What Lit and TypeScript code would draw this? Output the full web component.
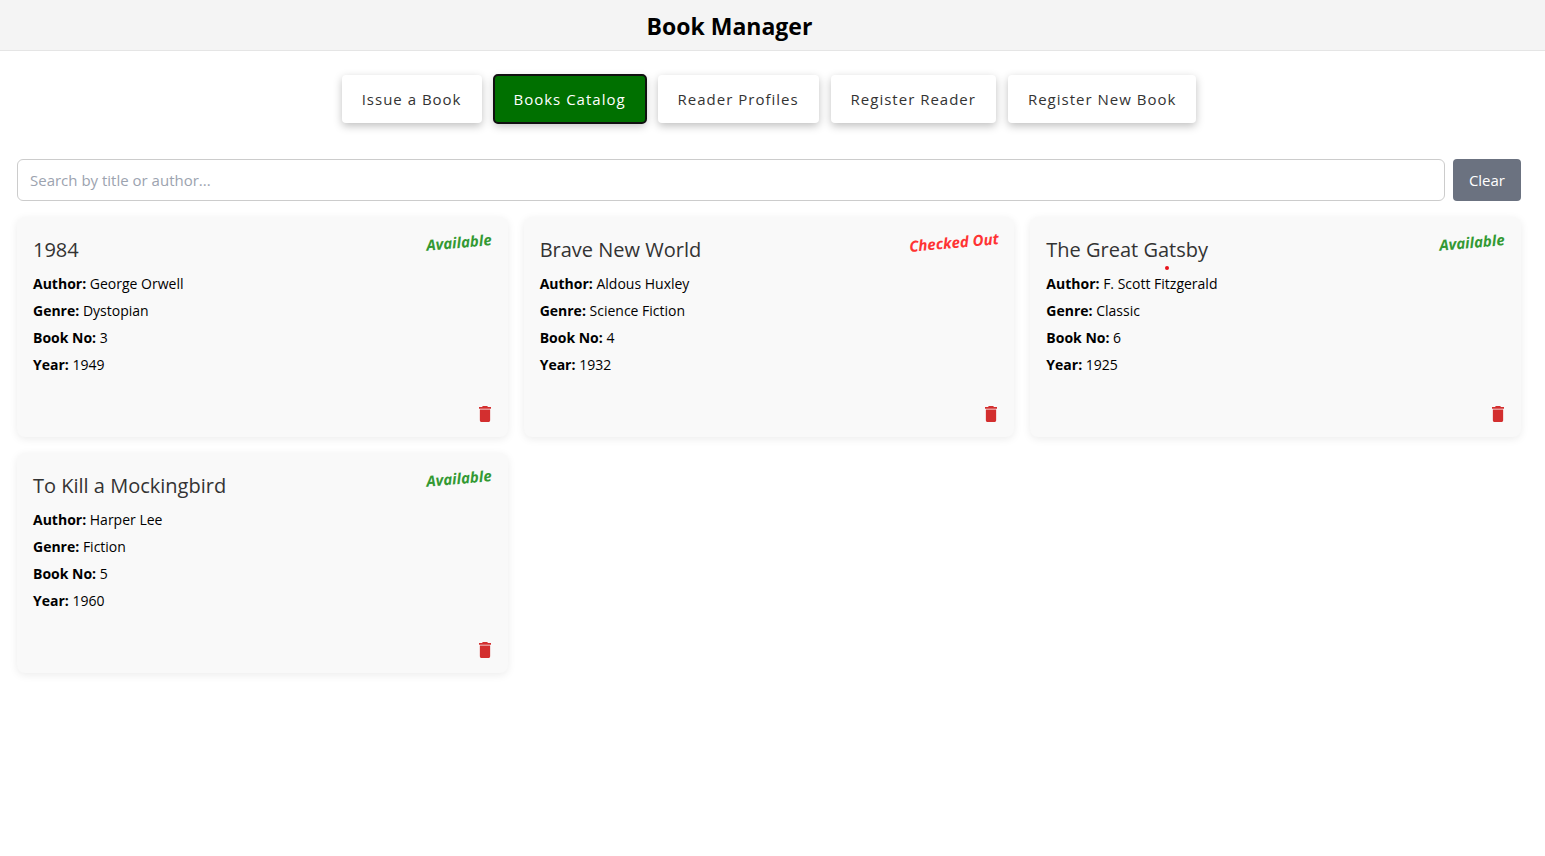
import { LitElement, html, css, svg } from "lit";
import { customElement, property, state } from "lit/decorators.js";
import { classMap } from "lit/directives/class-map.js";

interface Book {
  title: string;
  author: string;
  genre: string;
  no: number;
  year: number;
  available: boolean;
  marked?: boolean;
}

const BOOKS: Book[] = [
  { title: "1984", author: "George Orwell", genre: "Dystopian", no: 3, year: 1949, available: true },
  { title: "Brave New World", author: "Aldous Huxley", genre: "Science Fiction", no: 4, year: 1932, available: false },
  { title: "The Great Gatsby", author: "F. Scott Fitzgerald", genre: "Classic", no: 6, year: 1925, available: true, marked: true },
  { title: "To Kill a Mockingbird", author: "Harper Lee", genre: "Fiction", no: 5, year: 1960, available: true },
];

const TABS = ["Issue a Book", "Books Catalog", "Reader Profiles", "Register Reader", "Register New Book"];

const trashIcon = svg`<path d="M6 19c0 1.1.9 2 2 2h8c1.1 0 2-.9 2-2V7H6v12zM19 4h-3.5l-1-1h-5l-1 1H5v2h14V4z" fill="currentColor"/>`;

@customElement("book-card")
class BookCard extends LitElement {
  @property({ attribute: false }) book!: Book;

  static styles = css`
    :host {
      display: flex;
      flex-direction: column;
      position: relative;
      box-sizing: border-box;
      min-height: 220px;
      padding: 16px 16px 15px;
      border-radius: 8px;
      background: #f9f9f9;
      box-shadow: 0 2px 8px rgba(0, 0, 0, 0.08);
      color: #000;
    }
    .top {
      display: flex;
      justify-content: space-between;
      align-items: flex-start;
      margin-bottom: 3px;
    }
    .title {
      margin: 0;
      font-size: 20px;
      line-height: 34px;
      font-weight: 400;
      color: #333;
    }
    .status {
      font-size: 15px;
      line-height: 18px;
      font-weight: 700;
      font-style: italic;
      transform: rotate(-5deg);
      color: #339933;
    }
    .out {
      color: #ff3333;
    }
    .row {
      margin: 0;
      font-size: 14px;
      line-height: 27px;
    }
    .actions {
      display: flex;
      justify-content: flex-end;
      margin-top: auto;
    }
    .delete {
      display: flex;
      padding: 0 1px;
      border: 0;
      background: none;
      color: #d32f2f;
      cursor: pointer;
    }
    .dot {
      position: absolute;
      left: 135px;
      top: 49px;
      width: 4px;
      height: 4px;
      border-radius: 50%;
      background: #e8141c;
    }
  `;

  render() {
    const b = this.book;
    return html`
      <div class="top">
        <h2 class="title">${b.title}</h2>
        <span class=${classMap({ status: true, out: !b.available })}>${b.available ? "Available" : "Checked Out"}</span>
      </div>
      <p class="row"><strong>Author:</strong> ${b.author}</p>
      <p class="row"><strong>Genre:</strong> ${b.genre}</p>
      <p class="row"><strong>Book No:</strong> ${b.no}</p>
      <p class="row"><strong>Year:</strong> ${b.year}</p>
      <div class="actions">
        <button class="delete" type="button" aria-label="Delete ${b.title}">
          <svg width="12" height="16" viewBox="5 3 14 18" preserveAspectRatio="none">${trashIcon}</svg>
        </button>
      </div>
      ${b.marked ? html`<span class="dot"></span>` : null}
    `;
  }
}

@customElement("app-root")
class AppRoot extends LitElement {
  @state() private active = "Books Catalog";
  @state() private query = "";

  static styles = css`
    :host {
      display: block;
      min-height: 100vh;
      background: #fff;
      font-family: "Segoe UI", "Open Sans", "Noto Sans", sans-serif;
      color: #000;
    }
    .header {
      padding: 10px 86px 8px 0;
      border-bottom: 1px solid #e5e5e5;
      background: #f4f4f4;
      text-align: center;
    }
    .heading {
      margin: 0;
      font-size: 23px;
      line-height: 32px;
      font-weight: 700;
    }
    .page {
      padding: 24px 24px 24px 17px;
    }
    .tabs {
      display: flex;
      justify-content: center;
      gap: 12px;
      margin-bottom: 36px;
    }
    .tab {
      padding: 12px 20px;
      border: 0;
      border-radius: 4px;
      background: #fff;
      box-shadow: 0 3px 8px rgba(0, 0, 0, 0.25);
      font: inherit;
      font-size: 15px;
      line-height: 24px;
      letter-spacing: 1px;
      color: #333;
      cursor: pointer;
    }
    .active {
      background: #007000;
      color: #fff;
      outline: 2px solid #101010;
      outline-offset: -1px;
    }
    .search {
      display: flex;
      gap: 8px;
      margin-bottom: 16px;
    }
    .box {
      flex: 1;
      min-width: 0;
      box-sizing: border-box;
      padding: 8px 12px;
      border: 1px solid #ccc;
      border-radius: 6px;
      background: #fff;
      font: inherit;
      font-size: 15px;
      line-height: 24px;
      color: #000;
    }
    .box::placeholder {
      color: #9ca3af;
    }
    .clear {
      padding: 9px 16px;
      border: 0;
      border-radius: 4px;
      background: #6b7280;
      font: inherit;
      font-size: 15px;
      line-height: 24px;
      color: #fff;
      cursor: pointer;
    }
    .grid {
      display: grid;
      grid-template-columns: repeat(3, minmax(0, 1fr));
      gap: 16px;
    }
  `;

  render() {
    const q = this.query.toLowerCase();
    const books = BOOKS.filter((b) => (b.title + " " + b.author).toLowerCase().includes(q));
    return html`
      <header class="header"><h1 class="heading">Book Manager</h1></header>
      <main class="page">
        <nav class="tabs">
          ${TABS.map(
            (t) => html`<button
              type="button"
              class=${classMap({ tab: true, active: t === this.active })}
              @click=${() => (this.active = t)}
            >${t}</button>`
          )}
        </nav>
        <div class="search">
          <input
            class="box"
            type="text"
            aria-label="Search by title or author"
            placeholder="Search by title or author..."
            .value=${this.query}
            @input=${(e: Event) => (this.query = (e.target as HTMLInputElement).value)}
          />
          <button class="clear" type="button" @click=${() => (this.query = "")}>Clear</button>
        </div>
        <section class="grid">${books.map((b) => html`<book-card .book=${b}></book-card>`)}</section>
      </main>
    `;
  }
}
